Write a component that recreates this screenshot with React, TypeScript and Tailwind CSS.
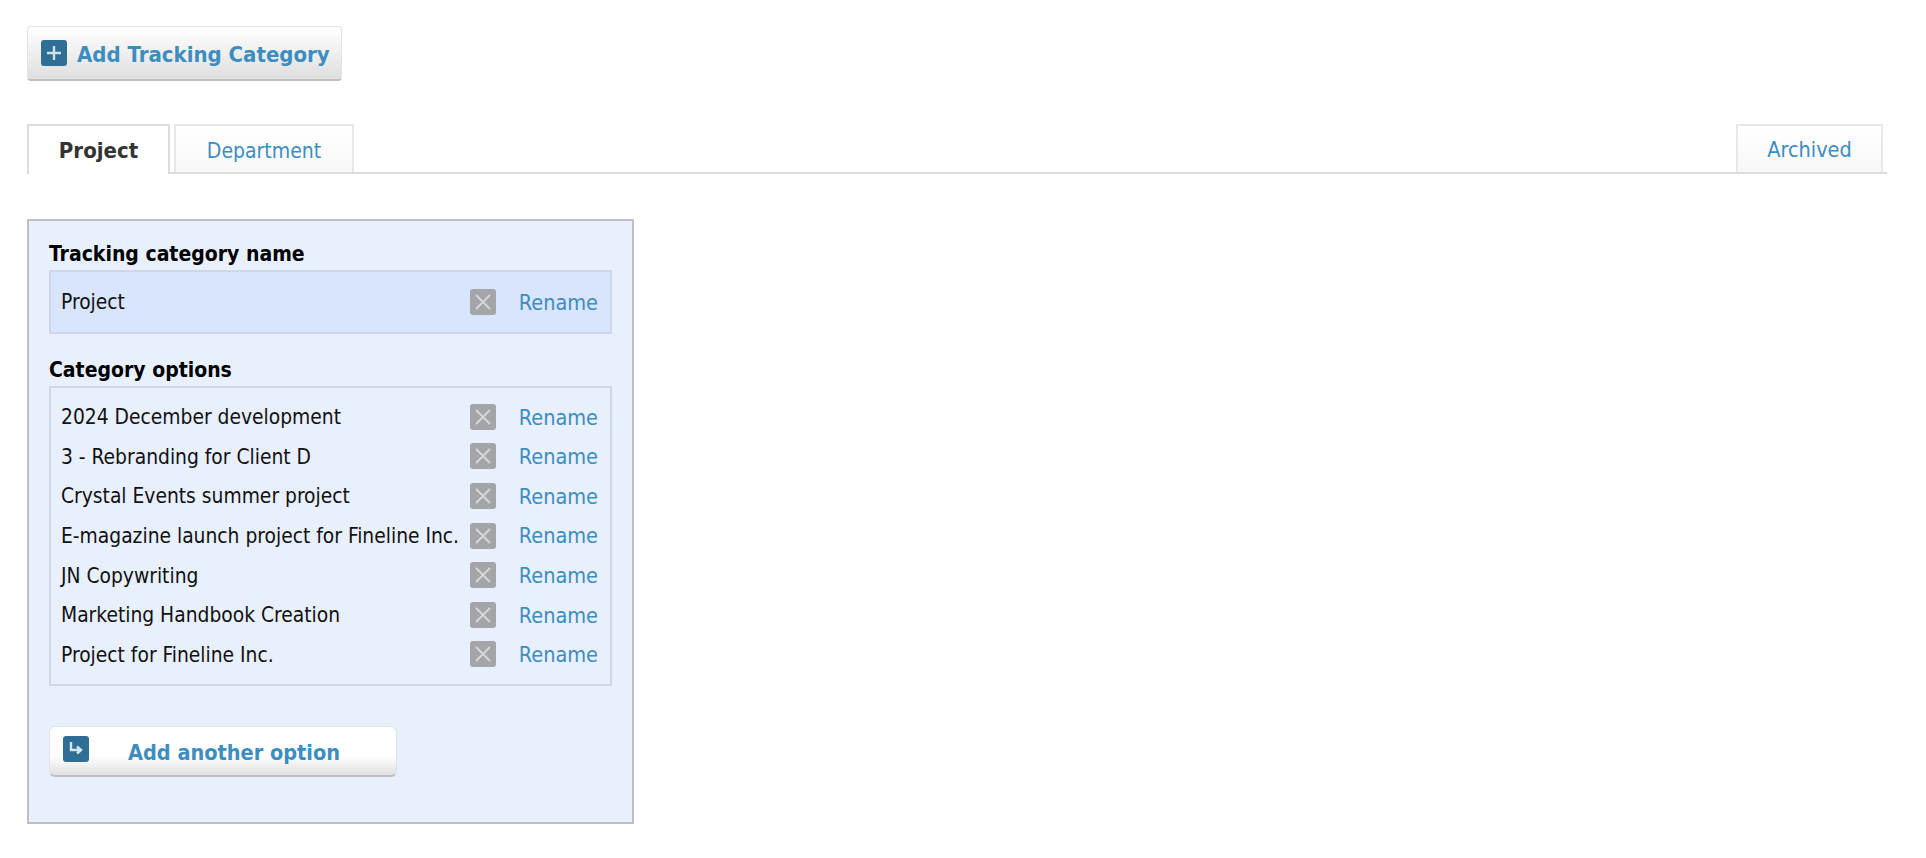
const rows = [
  "2024 December development",
  "3 - Rebranding for Client D",
  "Crystal Events summer project",
  "E-magazine launch project for Fineline Inc.",
  "JN Copywriting",
  "Marketing Handbook Creation",
  "Project for Fineline Inc.",
];

function RemoveIcon() {
  return (
    <span className="flex h-[26px] w-[26px] items-center justify-center rounded-[3px] bg-[#a3a5a8]">
      <svg width="20" height="20" viewBox="0 0 20 20" fill="none" stroke="#d6d8da" strokeWidth="1.8">
        <path d="M3 3L17 17M17 3L3 17" />
      </svg>
    </span>
  );
}

function OptionRow({ label, className }: { label: string; className: string }) {
  return (
    <div className={`flex items-center ${className}`}>
      <span className="mt-[2px] w-[409px] text-[20.8px] text-[#111]">{label}</span>
      <RemoveIcon />
      <a className="ml-auto mr-[2px] mt-[2px] text-[21.5px] text-[#3d8dbf]">Rename</a>
    </div>
  );
}

export default function App() {
  return (
    <div className="min-h-[858px] bg-white px-[27px] pt-[26px] font-['DejaVu_Sans',sans-serif] [font-stretch:condensed]">
      <button className="flex h-[55px] w-[315px] items-center rounded-[4px] border border-[#e2e2e2] border-b-2 border-b-[#c0c0c0] bg-gradient-to-b from-white to-[#dfdfdf] pl-[13px]">
        <span className="flex h-[26px] w-[26px] items-center justify-center rounded-[3px] bg-[#2f6f95]">
          <svg width="16" height="16" viewBox="0 0 16 16" stroke="#cfe0ea" strokeWidth="2.4">
            <path d="M8 1V15M1 8H15" />
          </svg>
        </span>
        <span className="ml-[10px] mt-[2px] text-[22px] font-bold text-[#3d8dbf]">Add Tracking Category</span>
      </button>

      <div className="mt-[43px] flex h-[50px] w-[1860px] items-end border-b-2 border-[#dcdcdc]">
        <div className="mb-[-2px] flex h-[50px] w-[143px] items-center justify-center border-2 border-b-0 border-[#dcdcdc] bg-white text-[22px] font-bold text-[#333]">
          Project
        </div>
        <div className="ml-[4px] flex h-[48px] w-[180px] items-center justify-center border-2 border-b-0 border-[#e8e8e8] bg-gradient-to-b from-white to-[#f8f8f8] pt-[5px] text-[21px] text-[#3d8dbf]">
          Department
        </div>
        <div className="ml-auto mr-[4px] flex h-[48px] w-[147px] items-center justify-center border-2 border-b-0 border-[#e8e8e8] bg-gradient-to-b from-white to-[#f8f8f8] pt-[3px] text-[21.5px] text-[#3d8dbf]">
          Archived
        </div>
      </div>

      <div className="mt-[45px] h-[605px] w-[607px] border-2 border-[#c0c0c4] bg-[#e8effd] px-[20px] pt-[17px]">
        <h3 className="text-[21px] font-bold leading-[32px] text-black">Tracking category name</h3>
        <div className="border-2 border-[#cfd7e6] bg-[#d8e5fc] px-[10px]">
          <OptionRow label="Project" className="h-[60px]" />
        </div>
        <h3 className="mt-[20px] text-[21px] font-bold leading-[32px] text-black">Category options</h3>
        <div className="border-2 border-[#cfd7e6] px-[10px] pb-[10px] pt-[9px]">
          {rows.map((r) => (
            <OptionRow key={r} label={r} className="h-[39.6px]" />
          ))}
        </div>
        <button className="mt-[40px] flex h-[51px] w-[348px] items-start rounded-[6px] border border-[#e2e2e2] border-b-2 border-b-[#c0c0c0] bg-gradient-to-b from-white from-60% to-[#e0e0e0] pl-[13px] pt-[9px]">
          <span className="flex h-[26px] w-[26px] items-center justify-center rounded-[3px] bg-[#2f6f95]">
            <svg width="16" height="16" viewBox="0 0 16 16" fill="none" stroke="#d5e4ee" strokeWidth="2.4">
              <path d="M3 1V9H12M9 5.5L13 9L9 12.5" />
            </svg>
          </span>
          <span className="ml-[39px] mt-[1px] text-[21.5px] font-bold text-[#3d8dbf]">Add another option</span>
        </button>
      </div>
    </div>
  );
}
